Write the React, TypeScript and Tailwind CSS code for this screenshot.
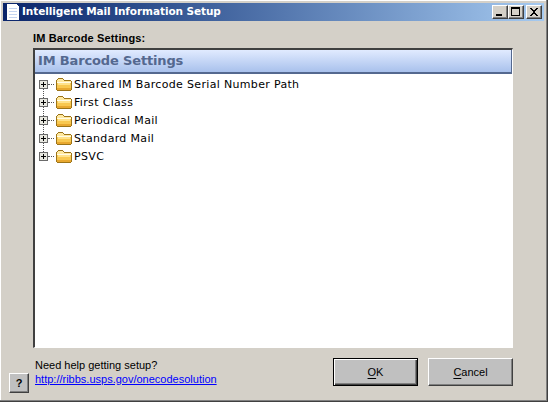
const rows = ["Shared IM Barcode Serial Number Path", "First Class", "Periodical Mail", "Standard Mail", "PSVC"];

function Folder() {
  return (
    <svg width="16" height="14" viewBox="0 0 16 14" className="shrink-0" shapeRendering="crispEdges">
      <path d="M1 2h1V1h5v1h1v1h7v1h1v9h-1v1H1v-1H0V3h1z" fill="#9c7418" />
      <path d="M1 3h1V2h5v1h1v1h7v1H1z" fill="#ffe9a0" />
      <path d="M1 5h14v8H1z" fill="#f8c850" />
      <path d="M1 5h14v1H1z" fill="#fffbe6" />
      <path d="M2 6h12v2H2z" fill="#ffe28a" />
      <path d="M1 11h14v2H1z" fill="#e8a830" />
    </svg>
  );
}

function Expander() {
  return (
    <svg width="9" height="9" viewBox="0 0 9 9" className="shrink-0" shapeRendering="crispEdges">
      <rect x="0.5" y="0.5" width="8" height="8" fill="#e8e8e0" stroke="#6a6a6a" />
      <path d="M2 4h5v1H2zM4 2h1v5H4z" fill="#000" />
    </svg>
  );
}

function WinButton({ kind, className = "" }: { kind: "min" | "max" | "close"; className?: string }) {
  return (
    <div className={`w-[16px] h-[14px] bg-[#d4d0c8] border-t border-l border-t-white border-l-white border-r border-b border-r-[#404040] border-b-[#404040] shadow-[inset_-1px_-1px_0_#808080] flex items-center justify-center ${className}`}>
      <svg width="12" height="10" viewBox="0 0 12 10" shapeRendering="crispEdges">
        {kind === "min" && <path d="M2 7h6v2H2z" fill="#000" />}
        {kind === "max" && <path d="M1 0h9v2H1zM1 2h1v7H1zM9 2h1v7H9zM1 8h9v1H1z" fill="#000" />}
        {kind === "close" && <path d="M2 1h2v1h1v1h2V2h1V1h2v1H9v1H8v1H7v2h1v1h1v1h1v1H8V8H7V7H5v1H4v1H2V8h1V7h1V6h1V4H4V3H3V2H2z" fill="#000" />}
      </svg>
    </div>
  );
}

function DialogButton({ first, rest, isDefault }: { first: string; rest: string; isDefault?: boolean }) {
  return (
    <button
      className={`w-[85px] h-[28px] bg-[#c0c0c0] text-[11px] text-black flex items-center justify-center ${
        isDefault
          ? "border border-black shadow-[inset_1px_1px_0_#fff,inset_-1px_-1px_0_#404040,inset_-2px_-2px_0_#808080]"
          : "border-t border-l border-t-white border-l-white border-r border-b border-r-[#404040] border-b-[#404040] shadow-[inset_-1px_-1px_0_#808080]"
      }`}
    >
      <span className="underline underline-offset-2">{first}</span>
      {rest}
    </button>
  );
}

export default function App() {
  return (
    <div
      className="w-[548px] h-[402px] bg-[#d4d0c8] flex flex-col border-r border-b border-r-[#404040] border-b-[#404040] shadow-[inset_-1px_-1px_0_#808080,inset_1px_1px_0_#fff] pt-[3px] pl-[3px] pr-[3px] overflow-hidden"
      style={{ fontFamily: '"Liberation Sans", Arial, sans-serif' }}
    >
      <div className="h-[18px] shrink-0 flex items-center bg-gradient-to-r from-[#0a246a] to-[#a6caf0] pl-[4px] pr-[2px]">
        <svg width="13" height="16" viewBox="0 0 13 16" className="shrink-0" shapeRendering="crispEdges">
          <path d="M0 0h9l3 3v13H0z" fill="#ffffff" />
          <path d="M2 4h8v1H2zM2 7h8v1H2zM2 10h8v1H2zM2 13h8v1H2z" fill="#c4d4f0" />
        </svg>
        <span className="ml-[2px] text-white font-bold text-[10.5px] tracking-[-0.08px]" style={{ fontFamily: '"DejaVu Sans", Verdana, sans-serif' }}>
          Intelligent Mail Information Setup
        </span>
        <div className="ml-auto flex">
          <WinButton kind="min" />
          <WinButton kind="max" />
          <WinButton kind="close" className="ml-[2px]" />
        </div>
      </div>

      <div className="flex-1 flex flex-col pl-[30px] pr-[31px] min-h-0">
        <div className="h-[27px] shrink-0 flex items-end pb-[4px] text-[11px] font-bold text-black leading-none tracking-[0.15px]">IM Barcode Settings:</div>
        <div className="w-[480px] h-[300px] shrink-0 bg-white border-t-2 border-l-2 border-t-[#404040] border-l-[#404040] border-r border-b border-r-white border-b-white flex flex-col" style={{ fontFamily: '"DejaVu Sans", Verdana, sans-serif' }}>
          <div className="h-[24px] shrink-0 bg-gradient-to-b from-[#e1ebff] to-[#a9c1ec] border-b-2 border-r border-[#54688f] pl-[3px] flex items-center text-[13px] font-bold tracking-[-0.15px] text-[#54688f]">
            IM Barcode Settings
          </div>
          <div className="pl-[4px] pt-[1px] relative">
            <div className="absolute left-[8px] top-[12px] h-[72px] border-l border-dotted border-[#555]" />
            {rows.map((r) => (
              <div key={r} className="h-[18px] flex items-center relative">
                <Expander />
                <div className="w-[6px] border-t border-dotted border-[#555] mr-[2px]" />
                <Folder />
                <span className="ml-[2px] pt-[2px] text-[11px] tracking-[0.33px] text-black whitespace-nowrap">{r}</span>
              </div>
            ))}
          </div>
        </div>

        <div className="flex items-end relative pt-[10px]">
          <div className="absolute left-[-24px] top-[25px]">
            <button className="w-[20px] h-[20px] bg-[#c0c0c0] border-t border-l border-t-white border-l-white border-r border-b border-r-[#404040] border-b-[#404040] shadow-[inset_-1px_-1px_0_#808080] text-[11px] font-bold flex items-center justify-center">?</button>
          </div>
          <div className="pl-[2px] text-[11px] leading-[14px]">
            <div className="text-black">Need help getting setup?</div>
            <a className="text-[#0000ff] underline">http://ribbs.usps.gov/onecodesolution</a>
          </div>
          <div className="ml-auto flex gap-[10px]">
            <DialogButton first="O" rest="K" isDefault />
            <DialogButton first="C" rest="ancel" />
          </div>
        </div>
      </div>
    </div>
  );
}
